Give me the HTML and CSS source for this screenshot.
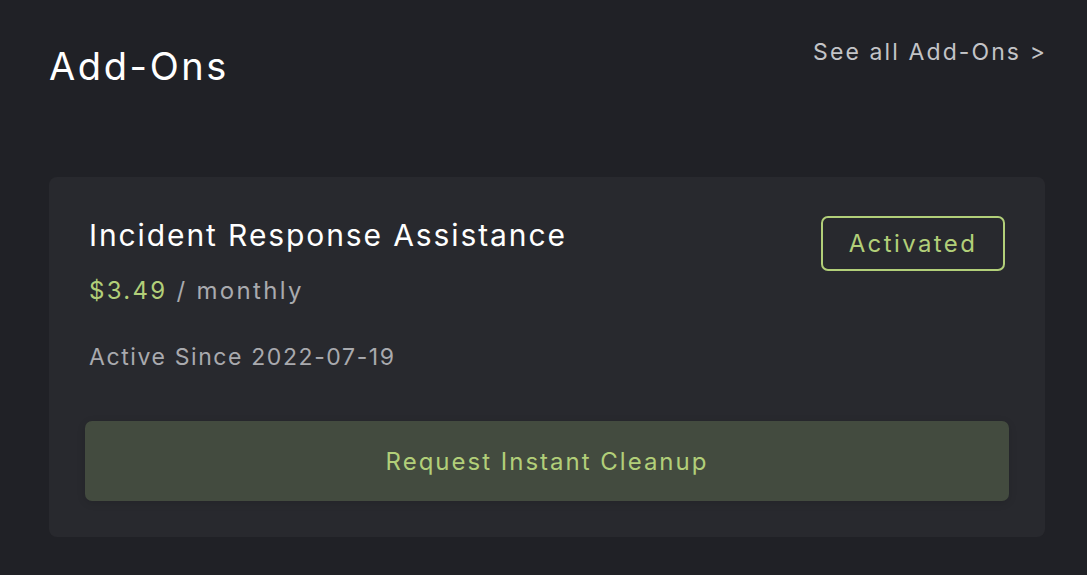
FILE: index.html
```html
<!DOCTYPE html>
<html lang="en">
<head>
<meta charset="utf-8">
<title>Add-Ons</title>
<link rel="stylesheet" href="styles.css">
</head>
<body>
<main class="page">
  <header class="section-head">
    <h1 class="section-title">Add-Ons</h1>
    <a class="see-all" href="#">See all Add-Ons &gt;</a>
  </header>
  <section class="card">
    <div class="card-top">
      <div class="card-info">
        <h2 class="card-title">Incident Response Assistance</h2>
        <p class="price"><span class="amount">$3.49</span> / monthly</p>
        <p class="since">Active Since 2022-07-19</p>
      </div>
      <span class="badge">Activated</span>
    </div>
    <button class="cta" type="button">Request Instant Cleanup</button>
  </section>
</main>
</body>
</html>
```
FILE: styles.css
```css
* { box-sizing: border-box; }
html, body { margin: 0; padding: 0; }
body {
  background: #202126;
  font-family: Inter, "Noto Sans", sans-serif;
  width: 1087px;
  height: 575px;
  overflow: hidden;
}
.page {
  padding: 0 42px 0 49px;
}
.section-head {
  display: flex;
  justify-content: space-between;
  align-items: flex-start;
  height: 177px;
}
.section-title {
  margin: 40px 0 0;
  font-size: 38px;
  font-weight: 400;
  color: #ffffff;
  letter-spacing: 2.6px;
  line-height: 52px;
}
.see-all {
  margin-top: 36px;
  margin-right: -2px;
  font-size: 23px;
  line-height: 32px;
  color: #c3c4c7;
  text-decoration: none;
  letter-spacing: 2.1px;
}
.card {
  width: 996px;
  background: #28292e;
  border-radius: 8px;
  padding: 39px 36px 36px;
}
.card-top {
  display: flex;
  justify-content: space-between;
  align-items: flex-start;
}
.card-info { padding-left: 4px; }
.card-title {
  margin: 0;
  font-size: 30px;
  font-weight: 400;
  color: #ffffff;
  line-height: 38px;
  letter-spacing: 1.9px;
}
.price {
  margin: 22px 0 0;
  font-size: 24px;
  line-height: 30px;
  color: #a9aaae;
  letter-spacing: 2.3px;
}
.amount { color: #b2cf79; }
.since {
  margin: 36px 0 0;
  font-size: 23px;
  line-height: 30px;
  color: #a9aaae;
  letter-spacing: 1.6px;
}
.badge {
  margin-right: 4px;
  width: 184px;
  height: 55px;
  border: 2px solid #b2cf79;
  border-radius: 7px;
  color: #b2cf79;
  font-size: 24px;
  letter-spacing: 2.4px;
  display: flex;
  align-items: center;
  justify-content: center;
}
.cta {
  display: block;
  width: 100%;
  height: 80px;
  margin-top: 49px;
  background: #434b3f;
  border: none;
  border-radius: 7px;
  color: #b2cf79;
  font-family: inherit;
  font-size: 24px;
  letter-spacing: 2px;
  box-shadow: 0 2px 8px rgba(0,0,0,0.12);
}
```
